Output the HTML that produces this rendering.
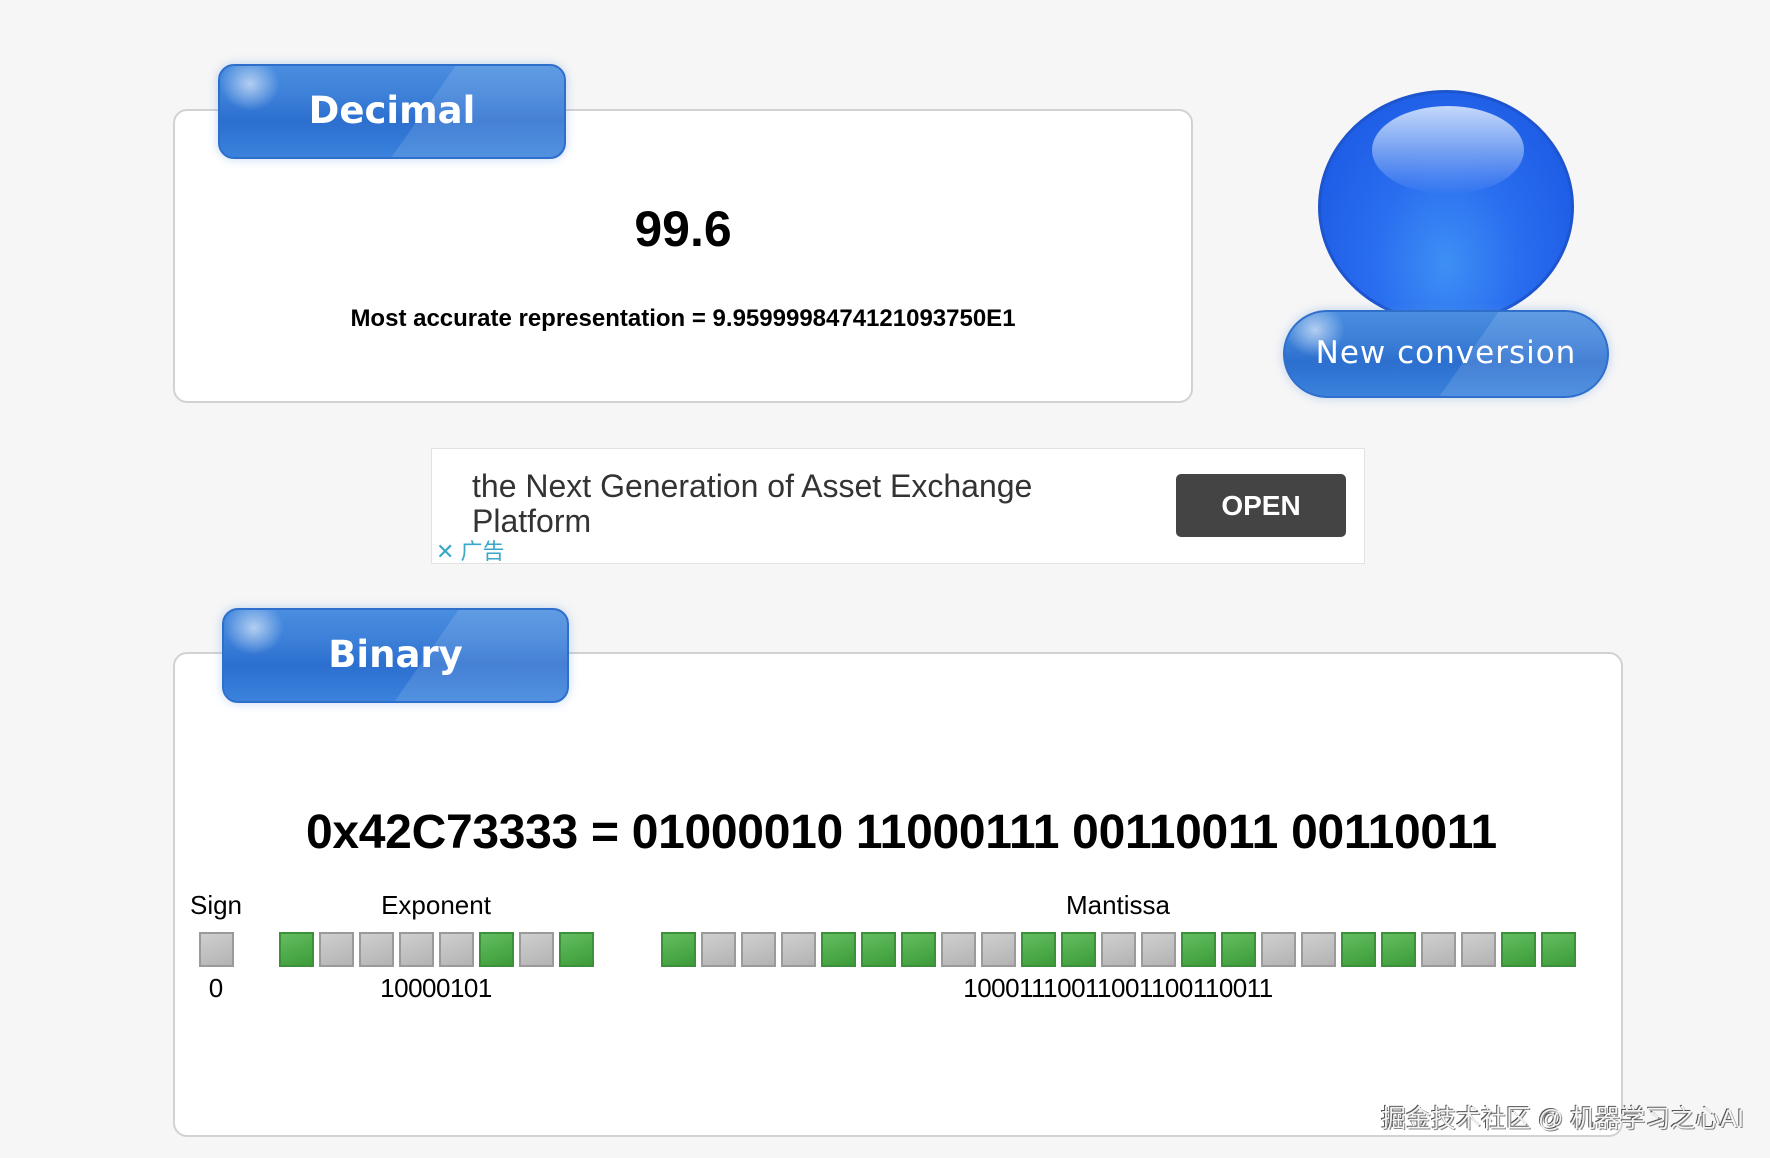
<!DOCTYPE html>
<html><head><meta charset="utf-8"><style>
body{margin:0;width:1770px;height:1158px;background:#f6f6f6;position:relative;overflow:hidden;font-family:"Liberation Sans",Arial,sans-serif;color:#000}
.abs{position:absolute}
.panel{position:absolute;background:#fff;border:2px solid #d2d2d2;border-radius:14px;box-sizing:border-box}
.tab{position:absolute;border-radius:16px;background:linear-gradient(180deg,#4a8ee0 0%,#3b7fd8 35%,#2c6fcf 60%,#3a82dc 100%);box-shadow:0 0 10px rgba(80,140,220,.35);border:2px solid #2f6fcc;box-sizing:border-box;color:#fff;font-family:"DejaVu Sans",sans-serif;font-weight:bold;text-align:center;overflow:hidden}
.tab:before{content:"";position:absolute;left:0;top:0;width:60px;height:45px;background:radial-gradient(ellipse at 50% 40%,rgba(255,255,255,.6),rgba(255,255,255,0) 70%)}
.tab:after{content:"";position:absolute;right:-30px;top:-10px;width:170px;height:110px;background:rgba(255,255,255,.12);transform:skewX(-35deg)}
.tab span{position:relative;z-index:1}
.row{position:absolute;display:flex;gap:5px}
.b{width:35px;height:35px;box-sizing:border-box;border:2px solid}
.g{background:linear-gradient(160deg,#63bd5f,#3c9c38);border-color:#3e8f3a}
.s{background:linear-gradient(160deg,#cfcfcf,#b3b3b3);border-color:#9a9a9a}
.lbl{position:absolute;font-size:26px;transform:translateX(-50%);white-space:nowrap}
</style></head><body>

<div class="panel" style="left:173px;top:109px;width:1020px;height:294px"></div>
<div class="tab" style="left:218px;top:64px;width:348px;height:95px;line-height:90px;font-size:37px"><span>Decimal</span></div>
<div class="abs" style="left:0;width:1366px;top:200px;text-align:center;font-size:50px;font-weight:bold;">99.6</div>
<div class="abs" style="left:0;width:1366px;top:305px;text-align:center;font-size:24px;font-weight:600">Most accurate representation = 9.9599998474121093750E1</div>

<div class="abs" style="left:1318px;top:90px;width:256px;height:234px;border-radius:50%;background:radial-gradient(ellipse at 50% 75%,#3d8ff5 0%,#2a6ef0 40%,#1f5ee6 75%,#1b50d0 100%);border:3px solid #1d55cf;box-sizing:border-box"></div>
<div class="abs" style="left:1372px;top:106px;width:152px;height:88px;border-radius:50%;background:linear-gradient(180deg,#c4d8fb 0%,#7ea7f3 45%,rgba(60,120,240,0.2) 100%)"></div>
<div class="tab" style="left:1283px;top:310px;width:326px;height:88px;border-radius:44px;line-height:82px;font-size:31px;font-weight:normal;letter-spacing:1px"><span>New conversion</span></div>

<div class="abs" style="left:431px;top:448px;width:934px;height:116px;background:#fff;border:1px solid #e2e2e2;box-sizing:border-box"></div>
<div class="abs" style="left:472px;top:469px;font-size:32px;line-height:35px;color:#333;">the Next Generation of Asset Exchange<br>Platform</div>
<div class="abs" style="left:1176px;top:474px;width:170px;height:63px;background:#444;border-radius:5px;color:#fff;font-size:28px;font-weight:bold;text-align:center;line-height:63px">OPEN</div>
<div class="abs" style="left:436px;top:534px;font-size:22px;color:#3aa7c9;font-family:'Liberation Sans','Noto Sans CJK SC',sans-serif">✕ 广告</div>

<div class="panel" style="left:173px;top:652px;width:1450px;height:485px"></div>
<div class="tab" style="left:222px;top:608px;width:347px;height:95px;line-height:90px;font-size:37px"><span>Binary</span></div>
<div class="abs" style="left:306px;top:805px;font-size:48px;font-weight:bold;white-space:nowrap;letter-spacing:-0.3px">0x42C73333 = 01000010 11000111 00110011 00110011</div>

<div class="lbl" style="left:216px;top:890px">Sign</div>
<div class="lbl" style="left:436px;top:890px">Exponent</div>
<div class="lbl" style="left:1118px;top:890px">Mantissa</div>

<div class="row" style="left:199px;top:932px"><div class="b s"></div></div>
<div class="row" style="left:279px;top:932px"><div class="b g"></div><div class="b s"></div><div class="b s"></div><div class="b s"></div><div class="b s"></div><div class="b g"></div><div class="b s"></div><div class="b g"></div></div>
<div class="row" style="left:661px;top:932px"><div class="b g"></div><div class="b s"></div><div class="b s"></div><div class="b s"></div><div class="b g"></div><div class="b g"></div><div class="b g"></div><div class="b s"></div><div class="b s"></div><div class="b g"></div><div class="b g"></div><div class="b s"></div><div class="b s"></div><div class="b g"></div><div class="b g"></div><div class="b s"></div><div class="b s"></div><div class="b g"></div><div class="b g"></div><div class="b s"></div><div class="b s"></div><div class="b g"></div><div class="b g"></div></div>

<div class="lbl" style="left:216px;top:973px">0</div>
<div class="lbl" style="left:436px;top:973px;letter-spacing:-0.5px">10000101</div>
<div class="lbl" style="left:1118px;top:973px;letter-spacing:-0.5px">10001110011001100110011</div>

<div class="abs" style="left:1381px;top:1099px;font-size:25px;color:#f4f4f4;font-family:'Liberation Sans','Noto Sans CJK SC',sans-serif;text-shadow:-1px -1px 0 #555,1px 1px 0 #888;white-space:nowrap">掘金技术社区 @ 机器学习之心AI</div>
</body></html>
